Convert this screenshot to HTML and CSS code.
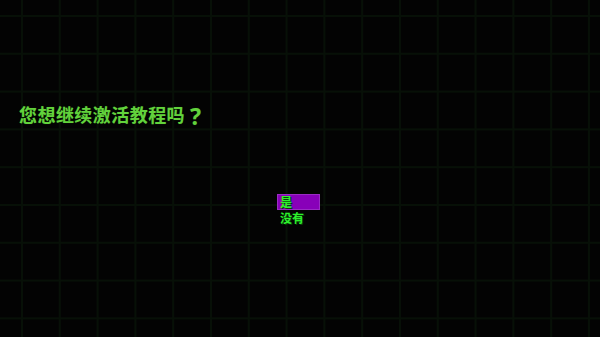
FILE: index.html
```html
<!DOCTYPE html>
<html lang="zh-CN">
<head>
<meta charset="utf-8">
<title>教程</title>
<link rel="stylesheet" href="styles.css">
</head>
<body>
<main class="screen">
  <h1 class="prompt">您想继续激活教程吗<span class="qmark">?</span></h1>
  <ul class="menu">
    <li class="item selected">是</li>
    <li class="item">没有</li>
  </ul>
</main>
</body>
</html>
```

FILE: styles.css
```css
html, body {
  margin: 0;
  padding: 0;
  width: 600px;
  height: 337px;
  overflow: hidden;
}
body {
  background-color: #030303;
  background-image:
    linear-gradient(to right, #071007 0, #071007 2px, transparent 2px),
    linear-gradient(to bottom, #071007 0, #071007 2px, transparent 2px);
  background-size: 37.8px 37.8px;
  background-position: 21px 15px;
  font-family: "Noto Sans CJK SC", "Noto Sans", sans-serif;
}
.screen {
  display: flex;
  flex-direction: column;
  padding-top: 103px;
}
.prompt {
  margin: 0 0 0 19px;
  height: 22px;
  font-size: 18px;
  line-height: 22px;
  font-weight: 700;
  letter-spacing: 0.45px;
  color: #62d23c;
  text-shadow: 0 0 1px #1d4a10;
}
.qmark {
  margin-left: 5px;
  font-family: "Noto Sans", sans-serif;
  font-size: 23px;
  line-height: 1;
  vertical-align: -3px;
}
.menu {
  list-style: none;
  margin: 69px 0 0 277px;
  padding: 0;
  width: 43px;
  display: flex;
  flex-direction: column;
}
.item {
  box-sizing: border-box;
  height: 16px;
  padding-left: 2px;
  border: 1px solid transparent;
  font-size: 12px;
  line-height: 14px;
  font-weight: 700;
  color: #2cf02c;
  text-shadow: 1px 1px 0 #0a3a0a;
}
.item.selected {
  background: #8800b9;
  border-color: #9a2cc4;
}
```
